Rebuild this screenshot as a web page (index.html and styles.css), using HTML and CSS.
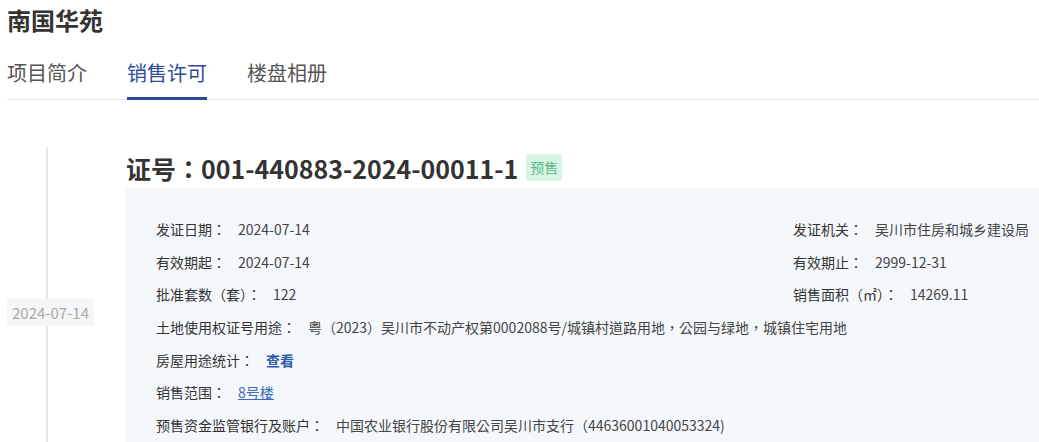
FILE: index.html
```html
<!DOCTYPE html>
<html>
<head>
  <meta charset="utf-8">
  <title>南国华苑 - 销售许可</title>
  <link rel="stylesheet" href="styles.css">
</head>
<body>
  <div class="page">
    <h1 class="project-title">南国华苑</h1>

    <ul class="tabs">
      <li class="tab">项目简介</li>
      <li class="tab active">销售许可</li>
      <li class="tab">楼盘相册</li>
    </ul>

    <div class="timeline">
      <div class="timeline-item">
        <div class="timeline-side">
          <span class="timeline-date">2024-07-14</span>
        </div>

        <div class="permit">
          <div class="permit-head">
            <h2 class="permit-no">证号：001-440883-2024-00011-1</h2>
            <span class="tag">预售</span>
          </div>

          <div class="permit-info">
            <div class="info-row">
              <span class="label">发证日期：</span><span class="value">2024-07-14</span>
            </div>
            <div class="info-row right">
              <span class="label">发证机关：</span><span class="value">吴川市住房和城乡建设局</span>
            </div>

            <div class="info-row">
              <span class="label">有效期起：</span><span class="value">2024-07-14</span>
            </div>
            <div class="info-row right">
              <span class="label">有效期止：</span><span class="value">2999-12-31</span>
            </div>

            <div class="info-row">
              <span class="label">批准套数（套）：</span><span class="value">122</span>
            </div>
            <div class="info-row right">
              <span class="label">销售面积（㎡）：</span><span class="value">14269.11</span>
            </div>

            <div class="info-row wide">
              <span class="label">土地使用权证号用途：</span><span class="value">粤（2023）吴川市不动产权第0002088号/城镇村道路用地，公园与绿地，城镇住宅用地</span>
            </div>
            <div class="info-row wide">
              <span class="label">房屋用途统计：</span><a class="value link-bold" href="#">查看</a>
            </div>
            <div class="info-row wide">
              <span class="label">销售范围：</span><a class="value link" href="#">8号楼</a>
            </div>
            <div class="info-row wide">
              <span class="label">预售资金监管银行及账户：</span><span class="value">中国农业银行股份有限公司吴川市支行（44636001040053324)</span>
            </div>
          </div>
        </div>
      </div>
    </div>
  </div>
</body>
</html>
```

FILE: styles.css
```css
html, body {
  margin: 0;
  padding: 0;
  background-color: #ffffff;
}

body {
  font-family: "Noto Sans CJK TC", "Noto Sans CJK SC", "Noto Sans", sans-serif;
  color: #333333;
  overflow: hidden;
}

.page {
  padding-left: 7px;
}

/* Title and tabs */
.project-title {
  margin: 0;
  padding-top: 4px;
  font-size: 24px;
  line-height: 32px;
  font-weight: bold;
  color: #333333;
}

.tabs {
  list-style-type: none;
  margin: 23px 0 0 0;
  padding: 0;
  display: flex;
  gap: 40px;
  border-bottom: 1px solid #e4e6ea;
}

.tab {
  font-size: 20px;
  line-height: 28px;
  padding-bottom: 10px;
  color: #555555;
  border-bottom: 3px solid transparent;
  margin-bottom: -1px;
}

.tab.active {
  color: #2b4c9b;
  border-bottom-color: #2b4c9b;
}

/* Timeline */
.timeline {
  margin-top: 47px;
}

.timeline-item {
  display: flex;
}

.timeline-side {
  width: 119px;
  flex-shrink: 0;
  background: linear-gradient(#e8e8e8, #e8e8e8) no-repeat 39px 0 / 2px 100%;
}

.timeline-date {
  display: inline-block;
  margin-top: 152px;
  padding: 0 5px;
  height: 27px;
  line-height: 27px;
  font-size: 15px;
  color: #aaaaaa;
  background-color: #f4f6f8;
}

/* Permit card */
.permit {
  flex: 1;
}

.permit-head {
  display: flex;
  align-items: center;
  gap: 8px;
  height: 41px;
}

.permit-no {
  margin: 0;
  font-size: 25px;
  line-height: 34px;
  font-weight: bold;
  color: #333333;
}

.tag {
  display: inline-block;
  height: 27px;
  line-height: 27px;
  padding: 0 4px;
  font-size: 14px;
  color: #5dbb86;
  background-color: #d8f4e5;
  border-radius: 2px;
}

.permit-info {
  background-color: #f5f8fb;
  padding: 25px 0 40px 30px;
  display: grid;
  grid-template-columns: 1fr 246px;
}

.info-row {
  font-size: 14px;
  line-height: 32.67px;
  white-space: nowrap;
}

.info-row.wide {
  grid-column: 1 / 3;
}

.label {
  color: #333333;
  margin-right: 12px;
}

.value {
  color: #444444;
}

.link-bold {
  color: #2f5cb0;
  font-weight: bold;
  text-decoration: none;
}

.link {
  color: #3a6ac0;
  text-decoration: underline;
}
```
